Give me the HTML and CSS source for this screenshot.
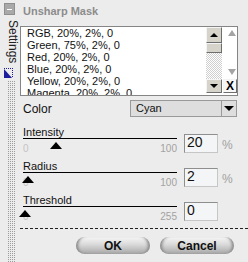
FILE: index.html
```html
<!DOCTYPE html>
<html lang="en">
<head>
  <meta charset="UTF-8">
  <title>Unsharp Mask</title>
  <link rel="stylesheet" href="styles.css">
</head>
<body>
  <div class="app">
    <!-- side tab -->
    <div class="strip">
      <div class="collapse"><span></span></div>
      <div class="strip-label">Settings</div>
      <svg class="strip-icon" width="9" height="10" viewBox="0 0 9 10">
        <polygon points="0,1 0,10 8,10" fill="#1c1c9c"/>
        <path d="M0 0.5h9M8.5 0v10" stroke="#1c1c9c" stroke-width="1" stroke-dasharray="1 1"/>
      </svg>
      <div class="grip"></div>
    </div>

    <div class="panel">
      <div class="title">Unsharp Mask</div>

      <!-- presets -->
      <div class="presets">
        <ul class="preset-list">
          <li>RGB, 20%, 2%, 0</li>
          <li>Green, 75%, 2%, 0</li>
          <li>Red, 20%, 2%, 0</li>
          <li>Blue, 20%, 2%, 0</li>
          <li>Yellow, 20%, 2%, 0</li>
          <li>Magenta, 20%, 2%, 0</li>
        </ul>
        <div class="scroll">
          <div class="sbtn"><span class="tri-up"></span></div>
          <div class="thumb"></div>
          <div class="track"></div>
          <div class="sbtn down"><span class="tri-down"></span></div>
        </div>
        <div class="tools">
          <span class="gtri-up"></span>
          <span class="gtri-down"></span>
          <div class="xbtn">X</div>
        </div>
      </div>

      <div class="color-row">
        <span class="color-label">Color</span>
        <div class="select">
          <span class="select-text">Cyan</span>
          <span class="select-arrow"><span class="tri-down"></span></span>
        </div>
      </div>

      <div class="param">
        <div class="slider">
          <div class="param-label">Intensity</div>
          <div class="line"></div>
          <div class="nums">
            <span class="min">0</span><span class="max">100</span>
            <span class="knob" style="left: 27px"></span>
          </div>
        </div>
        <div class="field">20</div>
        <span class="unit">%</span>
      </div>

      <div class="param">
        <div class="slider">
          <div class="param-label">Radius</div>
          <div class="line"></div>
          <div class="nums">
            <span class="min">0</span><span class="max">100</span>
            <span class="knob" style="left: -1px"></span>
          </div>
        </div>
        <div class="field">2</div>
        <span class="unit">%</span>
      </div>

      <div class="param">
        <div class="slider">
          <div class="param-label">Threshold</div>
          <div class="line"></div>
          <div class="nums">
            <span class="min">0</span><span class="max">255</span>
            <span class="knob" style="left: -4px"></span>
          </div>
        </div>
        <div class="field">0</div>
      </div>

      <div class="actions">
        <button class="pill">OK</button>
        <button class="pill">Cancel</button>
      </div>
    </div>
  </div>
</body>
</html>
```

FILE: styles.css
```css
body {
  margin: 0;
  font-family: "Liberation Sans", Arial, sans-serif;
  background: #ececec;
}

.app {
  display: flex;
  width: 248px;
  height: 262px;
  background: #ececec;
  overflow: hidden;
}

/* side tab */
.strip {
  width: 20px;
  display: flex;
  flex-direction: column;
  align-items: flex-start;
}

.collapse {
  width: 9px;
  height: 10px;
  margin: 3px 0 0 4px;
  background: #a9a9a9;
  border: 1px solid #8f8f8f;
  display: flex;
  align-items: center;
  justify-content: center;
}

.collapse span {
  width: 5px;
  height: 1px;
  background: #fff;
}

.strip-label {
  writing-mode: vertical-rl;
  font-size: 12px;
  line-height: 12px;
  color: #222;
  margin: 5px 0 0 7px;
}

.strip-icon {
  display: block;
  margin: 5px 0 0 4px;
}

.grip {
  width: 8px;
  flex: 1;
  margin: 3px 0 0 7px;
  background: repeating-conic-gradient(#9c9c9c 0 25%, transparent 0 100%) 0 0 / 2px 2px;
}

/* panel */
.panel {
  flex: 1;
  display: flex;
  flex-direction: column;
}

.title {
  height: 26px;
  box-sizing: border-box;
  padding: 4px 0 0 3px;
  font-size: 11px;
  line-height: 14px;
  font-weight: bold;
  color: #8c8c8c;
}

.presets {
  width: 218px;
  height: 70px;
  box-sizing: border-box;
  border: 1px solid #858585;
  background: #fff;
  display: flex;
}

.preset-list {
  list-style: none;
  margin: 0;
  padding: 0 0 0 6px;
  flex: 1;
  overflow: hidden;
  font-size: 11px;
  line-height: 12px;
  color: #111;
  white-space: nowrap;
}

.scroll {
  width: 16px;
  margin-right: 1px;
  display: flex;
  flex-direction: column;
  padding-bottom: 2px;
}

.sbtn, .thumb {
  box-sizing: border-box;
  background: #d6d3cb;
  border: 1px solid;
  border-color: #f4f4f4 #6e6e6e #6e6e6e #f4f4f4;
  display: flex;
  align-items: center;
  justify-content: center;
}

.sbtn { height: 16px; }
.sbtn.down { height: 14px; }
.thumb { height: 10px; }

.track {
  flex: 1;
  background: repeating-conic-gradient(#cfcfcf 0 25%, #fff 0 50%) 0 0 / 2px 2px;
}

.tri-up, .tri-down {
  width: 0;
  height: 0;
  border-left: 4px solid transparent;
  border-right: 4px solid transparent;
}

.tri-up { border-bottom: 4px solid #000; }
.tri-down { border-top: 4px solid #000; }

.tools {
  width: 14px;
  display: flex;
  flex-direction: column;
  align-items: center;
  padding: 3px 0 2px;
  box-sizing: border-box;
}

.gtri-up, .gtri-down {
  width: 0;
  height: 0;
  border-left: 4px solid transparent;
  border-right: 4px solid transparent;
  margin-left: 4px;
}

.gtri-up { border-bottom: 6px solid #a4a4a4; }
.gtri-down {
  border-top: 6px solid #a4a4a4;
  margin-top: auto;
  margin-bottom: 4px;
}

.xbtn {
  width: 14px;
  height: 14px;
  box-sizing: border-box;
  border: 1px solid;
  border-color: #f4f4f4 #6e6e6e #6e6e6e #f4f4f4;
  background: #f7f7f7;
  font-size: 12px;
  font-weight: bold;
  line-height: 12px;
  text-align: center;
  color: #000;
}

/* colour select */
.color-row {
  display: flex;
  align-items: center;
  height: 17px;
  margin-top: 4px;
}

.color-label {
  padding-left: 3px;
  font-size: 12px;
  color: #111;
}

.select {
  margin-left: auto;
  margin-right: 11px;
  width: 107px;
  height: 17px;
  box-sizing: border-box;
  border: 1px solid #9a9a9a;
  background: #dedede;
  display: flex;
}

.select-text {
  flex: 1;
  padding-left: 5px;
  font-size: 11px;
  line-height: 15px;
  color: #111;
}

.select-arrow {
  width: 14px;
  border-left: 1px solid #9a9a9a;
  display: flex;
  align-items: center;
  justify-content: center;
}

.select-arrow .tri-down {
  border-left-width: 5px;
  border-right-width: 5px;
  border-top-width: 5px;
}

/* sliders */
.param {
  display: flex;
  align-items: flex-start;
  height: 34px;
  padding-left: 3px;
}

.color-row + .param { margin-top: 9px; }

.slider { width: 154px; }

.param-label {
  font-size: 11px;
  line-height: 12px;
  color: #111;
}

.line {
  height: 1px;
  background: #000;
}

.nums {
  position: relative;
  height: 15px;
  display: flex;
  justify-content: space-between;
  align-items: flex-end;
  font-size: 10px;
  line-height: 10px;
}

.min { color: #c4c4c4; }
.max { color: #a2a2a2; }

.knob {
  position: absolute;
  top: 3px;
  width: 0;
  height: 0;
  border-left: 6px solid transparent;
  border-right: 6px solid transparent;
  border-bottom: 7px solid #000;
}

.field {
  width: 34px;
  height: 19px;
  box-sizing: border-box;
  margin: 8px 0 0 7px;
  padding-left: 2px;
  border: 1px solid;
  border-color: #8e8e8e #c6c6c6 #c6c6c6 #8e8e8e;
  background: #f3f5f7;
  font-size: 14px;
  line-height: 14px;
  color: #111;
}

.unit {
  margin: 12px 0 0 4px;
  font-size: 12px;
  color: #a0a0a0;
}

/* buttons */
.actions {
  border-top: 1px dashed #222;
  display: flex;
  justify-content: flex-end;
  gap: 10px;
  padding: 8px 14px 0 0;
}

.pill {
  width: 74px;
  height: 17px;
  padding: 0;
  border: none;
  border-radius: 9px;
  background: linear-gradient(#f6f6f6, #d9d9d9 45%, #b9b9b9 80%, #a2a2a2);
  box-shadow: inset 4px 0 3px -2px #8a8a8a, inset -4px 0 3px -2px #8a8a8a;
  font-family: "Liberation Sans", Arial, sans-serif;
  font-size: 12px;
  font-weight: bold;
  color: #111;
}
```
